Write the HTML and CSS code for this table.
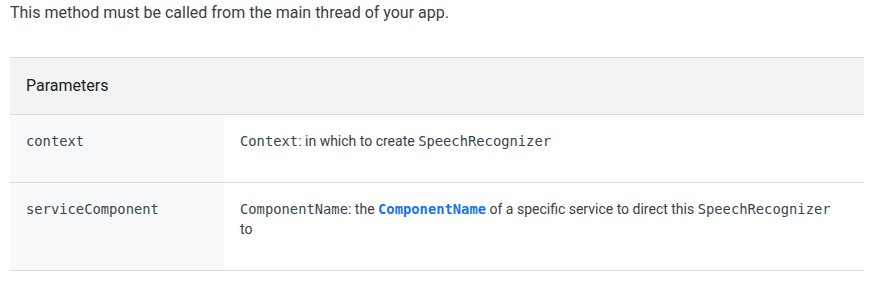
FILE: index.html
```html
<!DOCTYPE html>
<html lang="en">
<head>
<meta charset="utf-8">
<link rel="stylesheet" href="styles.css">
</head>
<body>
<div class="page">
  <p class="intro">This method must be called from the main thread of your app.</p>
  <table class="params">
    <thead>
      <tr><th colspan="2">Parameters</th></tr>
    </thead>
    <tbody>
      <tr>
        <td class="name"><code>context</code></td>
        <td class="desc"><code>Context</code>: in which to create <code>SpeechRecognizer</code></td>
      </tr>
      <tr>
        <td class="name"><code>serviceComponent</code></td>
        <td class="desc"><code>ComponentName</code>: the <a class="link" href="#"><code>ComponentName</code></a> of a specific service to direct this <code>SpeechRecognizer</code> to</td>
      </tr>
    </tbody>
  </table>
</div>
</body>
</html>
```
FILE: styles.css
```css
html, body {
  margin: 0;
  padding: 0;
  background: #ffffff;
}
.page {
  padding: 0 11px 0 10px;
  font-family: Roboto, "Noto Sans", Arial, sans-serif;
  color: #202124;
}
.intro {
  margin: 0;
  font-size: 16px;
  line-height: 26px;
  color: #3c4043;
}
.params {
  margin-top: 31px;
  width: 854px;
  border-collapse: collapse;
  font-size: 14px;
  line-height: 20px;
}
.params th {
  background: #f1f3f4;
  text-align: left;
  font-size: 16px;
  font-weight: 400;
  line-height: 24px;
  padding: 16px;
  border-top: 1px solid #dadce0;
  border-bottom: 1px solid #dadce0;
  color: #202124;
}
.params td {
  vertical-align: top;
  padding: 16px 16px 31px 16px;
  border-bottom: 1px solid #dadce0;
}
.params td.name {
  width: 182px;
  background: #f8f9fa;
}
.params td.desc {
  padding-right: 20px;
  color: #3c4043;
}
code {
  font-family: "DejaVu Sans Mono", "Liberation Mono", monospace;
  font-size: 13.8px;
  color: #37474f;
}
.link {
  text-decoration: none;
}
.link code {
  color: #1a73e8;
  font-weight: 700;
}
```
